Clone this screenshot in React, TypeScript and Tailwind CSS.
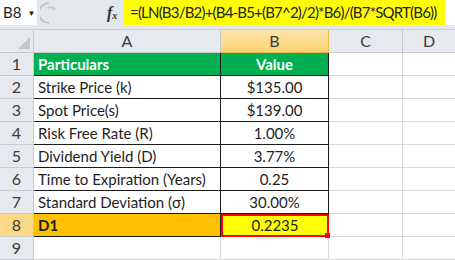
const rows = [
  { n: "2", a: "Strike Price (k)", b: "$135.00" },
  { n: "3", a: "Spot Price(s)", b: "$139.00" },
  { n: "4", a: "Risk Free Rate (R)", b: "1.00%" },
  { n: "5", a: "Dividend Yield (D)", b: "3.77%" },
  { n: "6", a: "Time to Expiration (Years)", b: "0.25" },
  { n: "7", a: "Standard Deviation (σ)", b: "30.00%" },
];

const font = { fontFamily: "Lato, 'Open Sans', sans-serif" };

function RowHead({ n, active }: { n: string; active?: boolean }) {
  return (
    <div
      className={
        "h-[23px] flex items-center justify-center text-[16px] text-[#3a3a3a] border-b border-r border-[#c6cbd1] " +
        (active ? "bg-[#fbd886]" : "bg-[#e6e9ee]")
      }
    >
      {n}
    </div>
  );
}

export default function App() {
  return (
    <div className="w-[455px] h-[260px] overflow-hidden bg-white" style={font}>
      {/* formula bar */}
      <div className="h-[30px] flex bg-[#e4e7eb] border-b border-[#c9cdd2]">
        <div className="w-[37px] h-[25px] bg-white flex items-center pl-[3px] text-[15px] text-[#222]">
          B8
          <span className="ml-[6px] text-[8px] text-[#222]">▼</span>
        </div>
        <div className="w-[70px] h-[25px] flex items-center pl-[3px]">
          <svg width="16" height="22" viewBox="0 0 16 22">
            <path d="M9 1 A10 10 0 0 0 9 21" fill="none" stroke="#b8bcc2" strokeWidth="1.5" />
            <path d="M8 6 A5 5 0 0 1 15 8" fill="none" stroke="#c9ccd0" strokeWidth="2" />
          </svg>
        </div>
        <div className="w-[17px] h-[25px] flex items-center justify-start text-[#333]" style={{ fontFamily: "'Liberation Serif', serif" }}>
          <span className="italic font-bold text-[16px]">f</span>
          <span className="italic font-bold text-[10px] mt-[5px]">x</span>
        </div>
        <div className="w-[321px] h-[25px] bg-[#ffff00] flex items-center pl-[6px] text-[15px] tracking-[-0.8px] text-[#222] whitespace-nowrap overflow-hidden">
          =(LN(B3/B2)+(B4-B5+(B7^2)/2)*B6)/(B7*SQRT(B6))
        </div>
        <div className="flex-1 h-[25px] bg-white"></div>
      </div>

      {/* grid */}
      <div className="grid grid-cols-[34px_187px_108px_74px_52px] text-[15px] text-[#1e1e1e]">
        {/* column headers */}
        <div className="h-[23px] bg-[#e6e9ee] border-b border-r border-[#c6cbd1] relative">
          <svg className="absolute right-[3px] bottom-[3px]" width="12" height="12" viewBox="0 0 12 12">
            <path d="M12 0 L12 12 L0 12 Z" fill="#c3c7cc" />
          </svg>
        </div>
        <div className="h-[23px] bg-[#e6e9ee] border-b border-r border-[#c6cbd1] flex items-center justify-center text-[16px] text-[#3a3a3a]">A</div>
        <div className="h-[23px] bg-gradient-to-b from-[#fde6a6] to-[#fcd277] border-b border-r border-[#e8b84a] flex items-center justify-center text-[16px] text-[#3a3a3a]">B</div>
        <div className="h-[23px] bg-[#e6e9ee] border-b border-r border-[#c6cbd1] flex items-center justify-center text-[16px] text-[#3a3a3a]">C</div>
        <div className="h-[23px] bg-[#e6e9ee] border-b border-[#c6cbd1] flex items-center justify-center text-[16px] text-[#3a3a3a]">D</div>

        {/* row 1 */}
        <RowHead n="1" />
        <div className="h-[23px] bg-[#00b050] border-b border-r border-[#1a1a1a] flex items-center pl-[4px] font-bold text-white">Particulars</div>
        <div className="h-[23px] bg-[#00b050] border-b border-r border-[#1a1a1a] flex items-center justify-center font-bold text-white">Value</div>
        <div className="h-[23px] border-b border-r border-[#d8d8d8]"></div>
        <div className="h-[23px] border-b border-[#d8d8d8]"></div>

        {rows.map((r) => (
          <div key={r.n} className="contents">
            <RowHead n={r.n} />
            <div className="h-[23px] border-b border-r border-[#1a1a1a] flex items-center pl-[4px] whitespace-nowrap">{r.a}</div>
            <div className="h-[23px] border-b border-r border-[#1a1a1a] flex items-center justify-center">{r.b}</div>
            <div className="h-[23px] border-b border-r border-[#d8d8d8]"></div>
            <div className="h-[23px] border-b border-[#d8d8d8]"></div>
          </div>
        ))}

        {/* row 8 */}
        <RowHead n="8" active />
        <div className="h-[23px] bg-[#ffc000] border-b border-r border-[#1a1a1a] flex items-center pl-[4px] font-bold">D1</div>
        <div className="h-[23px] bg-[#ffff00] border-2 border-[#ff0000] flex items-center justify-center relative">
          0.2235
          <span className="absolute right-[-3px] bottom-[-3px] w-[5px] h-[5px] bg-[#ff0000]"></span>
        </div>
        <div className="h-[23px] border-b border-r border-[#d8d8d8]"></div>
        <div className="h-[23px] border-b border-[#d8d8d8]"></div>

        {/* row 9 */}
        <RowHead n="9" />
        <div className="h-[23px] border-b border-r border-[#d8d8d8]"></div>
        <div className="h-[23px] border-b border-r border-[#d8d8d8]"></div>
        <div className="h-[23px] border-b border-r border-[#d8d8d8]"></div>
        <div className="h-[23px] border-b border-[#d8d8d8]"></div>
      </div>
    </div>
  );
}
